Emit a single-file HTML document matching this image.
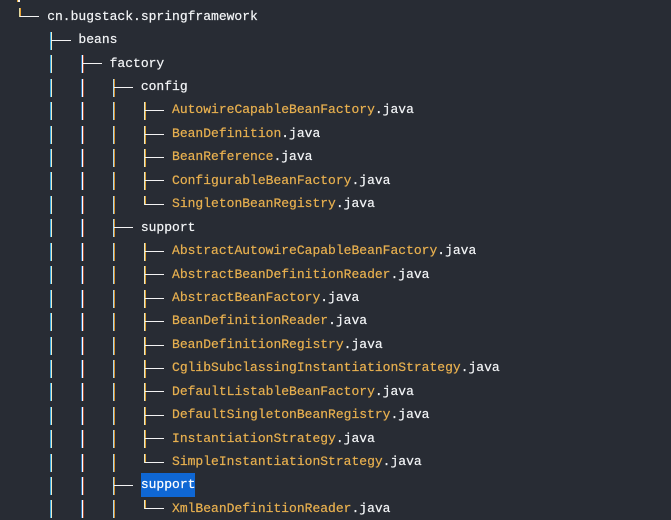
<!DOCTYPE html>
<html>
<head>
<meta charset="utf-8">
<style>
html,body{margin:0;padding:0;width:671px;height:520px;overflow:hidden;background:#282c34;}
pre{position:absolute;left:16px;top:-18.73px;margin:0;font:13px/23.43px "Liberation Mono",monospace;color:#f3f5f7;white-space:pre;-webkit-text-stroke:.2px currentColor;}
b{font-weight:normal;color:#e8b04f;}
i{font-style:normal;background:#0f67d4;display:inline-block;height:23.4px;line-height:23.4px;vertical-align:top;color:#fff;}
svg{position:absolute;left:0;top:0;}
</style>
</head>
<body>
<svg width="671" height="520" shape-rendering="crispEdges">
<defs>
<g id="p1"><rect x="50" y="-8" width="1" height="18" fill="#35a5e0"/><rect x="51" y="-8" width="1" height="18" fill="#f0e8c0"/></g>
<g id="p2"><rect x="81" y="-8" width="1" height="18" fill="#2a70b0"/><rect x="82" y="-8" width="1" height="18" fill="#fff"/><rect x="83" y="-8" width="1" height="18" fill="#a04a30"/></g>
<g id="p3"><rect x="113" y="-8" width="1" height="18" fill="#a8d8f0"/><rect x="114" y="-8" width="1" height="18" fill="#d8922c"/></g>
<g id="p4"><rect x="144" y="-8" width="1" height="18" fill="#e0e8d0"/><rect x="145" y="-8" width="1" height="18" fill="#e0a030"/></g>
<g id="a"><use href="#p1"/><use href="#p2"/><use href="#p3"/></g>
<g id="r3"><use href="#a"/><rect x="114" y="0" width="19" height="1" fill="#f3f3f3"/></g>
<g id="t4"><use href="#a"/><use href="#p4"/><rect x="145" y="0" width="19" height="1" fill="#f3f3f3"/></g>
<g id="l4"><use href="#a"/><rect x="144" y="-8" width="1" height="9" fill="#e0e8d0"/><rect x="145" y="-8" width="1" height="9" fill="#e0a030"/><rect x="145" y="0" width="19" height="1" fill="#f3f3f3"/></g>
</defs>
<rect x="17" y="0" width="1" height="2" fill="#e8a830"/><rect x="18" y="0" width="2" height="2" fill="#f3f3f3"/>
<rect x="19" y="8" width="1" height="9" fill="#e0d8a0"/><rect x="20" y="8" width="1" height="9" fill="#e8a030"/><rect x="20" y="16" width="19" height="1" fill="#f3f3f3"/>
<use href="#p1" y="40"/><rect x="51" y="40" width="20" height="1" fill="#f3f3f3"/>
<use href="#p1" y="63"/><use href="#p2" y="63"/><rect x="82" y="63" width="20" height="1" fill="#f3f3f3"/>
<use href="#r3" y="87"/>
<use href="#t4" y="110"/>
<use href="#t4" y="134"/>
<use href="#t4" y="157"/>
<use href="#t4" y="180"/>
<use href="#l4" y="204"/>
<use href="#r3" y="227"/>
<use href="#t4" y="251"/>
<use href="#t4" y="274"/>
<use href="#t4" y="298"/>
<use href="#t4" y="321"/>
<use href="#t4" y="345"/>
<use href="#t4" y="368"/>
<use href="#t4" y="391"/>
<use href="#t4" y="415"/>
<use href="#t4" y="438"/>
<use href="#l4" y="462"/>
<use href="#r3" y="485"/>
<use href="#l4" y="508"/>
</svg>
<pre> 
    cn.bugstack.springframework
        beans
            factory
                config
                    <b>AutowireCapableBeanFactory</b>.java
                    <b>BeanDefinition</b>.java
                    <b>BeanReference</b>.java
                    <b>ConfigurableBeanFactory</b>.java
                    <b>SingletonBeanRegistry</b>.java
                support
                    <b>AbstractAutowireCapableBeanFactory</b>.java
                    <b>AbstractBeanDefinitionReader</b>.java
                    <b>AbstractBeanFactory</b>.java
                    <b>BeanDefinitionReader</b>.java
                    <b>BeanDefinitionRegistry</b>.java
                    <b>CglibSubclassingInstantiationStrategy</b>.java
                    <b>DefaultListableBeanFactory</b>.java
                    <b>DefaultSingletonBeanRegistry</b>.java
                    <b>InstantiationStrategy</b>.java
                    <b>SimpleInstantiationStrategy</b>.java
                <i>support</i>
                    <b>XmlBeanDefinitionReader</b>.java
</pre>
</body>
</html>
